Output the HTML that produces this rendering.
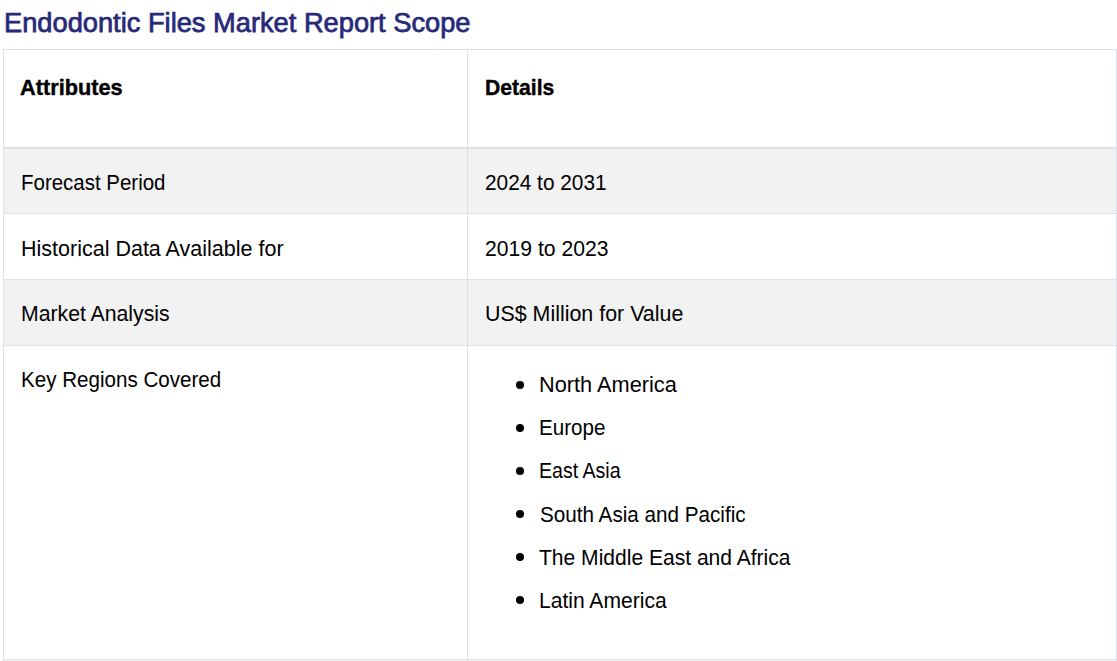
<!DOCTYPE html>
<html><head><meta charset="utf-8">
<style>
html,body{margin:0;padding:0;background:#fff;width:1117px;height:661px;overflow:hidden;}
body{font-family:"Liberation Sans",sans-serif;color:#000;position:relative;}
.t{position:absolute;white-space:nowrap;line-height:30px;font-size:22.0px;transform-origin:0 0;}
.title{position:absolute;-webkit-text-stroke:0.75px #27297a;white-space:nowrap;font-size:27.3px;line-height:34px;color:#27297a;transform-origin:0 0;}
.bg{position:absolute;left:4px;width:1112px;}
.hl{position:absolute;left:3px;width:1114px;height:1px;background:#dee2e6;}
.vl{position:absolute;width:1px;background:#dee2e6;}
.b{font-weight:bold;-webkit-text-stroke:0.4px #000;}
.dot{position:absolute;width:8px;height:8px;border-radius:50%;background:#000;}
</style></head><body>
<div class="bg" style="top:149px;height:64px;background:#f2f2f2"></div>
<div class="bg" style="top:280px;height:65px;background:#f2f2f2"></div>
<div class="bg" style="top:660px;height:1px;background:#f2f2f2"></div>
<div class="hl" style="top:49px"></div>
<div class="hl" style="top:147px;height:2px"></div>
<div class="hl" style="top:213px"></div>
<div class="hl" style="top:279px"></div>
<div class="hl" style="top:345px"></div>
<div class="hl" style="top:659px"></div>
<div class="vl" style="left:3px;top:49px;height:612px"></div>
<div class="vl" style="left:467px;top:49px;height:612px"></div>
<div class="vl" style="left:1116px;top:49px;height:612px"></div>
<div class="dot" style="left:516px;top:381px"></div>
<div class="dot" style="left:516px;top:424px"></div>
<div class="dot" style="left:516px;top:467px"></div>
<div class="dot" style="left:516px;top:510px"></div>
<div class="dot" style="left:516px;top:553px"></div>
<div class="dot" style="left:516px;top:596px"></div>
<div class="title" style="left:4.20px;top:6px;transform:scaleX(0.9983);">Endodontic Files Market Report Scope</div>
<div class="t b" style="left:20.20px;top:73px;transform:scaleX(0.9885);">Attributes</div>
<div class="t b" style="left:485.29px;top:73px;transform:scaleX(0.9616);">Details</div>
<div class="t" style="left:21.13px;top:168px;transform:scaleX(0.9304);">Forecast Period</div>
<div class="t" style="left:484.64px;top:168px;transform:scaleX(0.9465);">2024 to 2031</div>
<div class="t" style="left:21.44px;top:234px;transform:scaleX(0.9775);">Historical Data Available for</div>
<div class="t" style="left:484.63px;top:234px;transform:scaleX(0.9607);">2019 to 2023</div>
<div class="t" style="left:21.06px;top:299px;transform:scaleX(0.9644);">Market Analysis</div>
<div class="t" style="left:484.54px;top:299px;transform:scaleX(0.9732);">US$ Million for Value</div>
<div class="t" style="left:20.55px;top:365px;transform:scaleX(0.9355);">Key Regions Covered</div>
<div class="t" style="left:538.81px;top:370px;transform:scaleX(0.9884);">North America</div>
<div class="t" style="left:538.87px;top:413px;transform:scaleX(0.9368);">Europe</div>
<div class="t" style="left:538.95px;top:456px;transform:scaleX(0.8892);">East Asia</div>
<div class="t" style="left:539.87px;top:500px;transform:scaleX(0.9393);">South Asia and Pacific</div>
<div class="t" style="left:538.93px;top:543px;transform:scaleX(0.9565);">The Middle East and Africa</div>
<div class="t" style="left:538.86px;top:586px;transform:scaleX(0.9576);">Latin America</div>
</body></html>
